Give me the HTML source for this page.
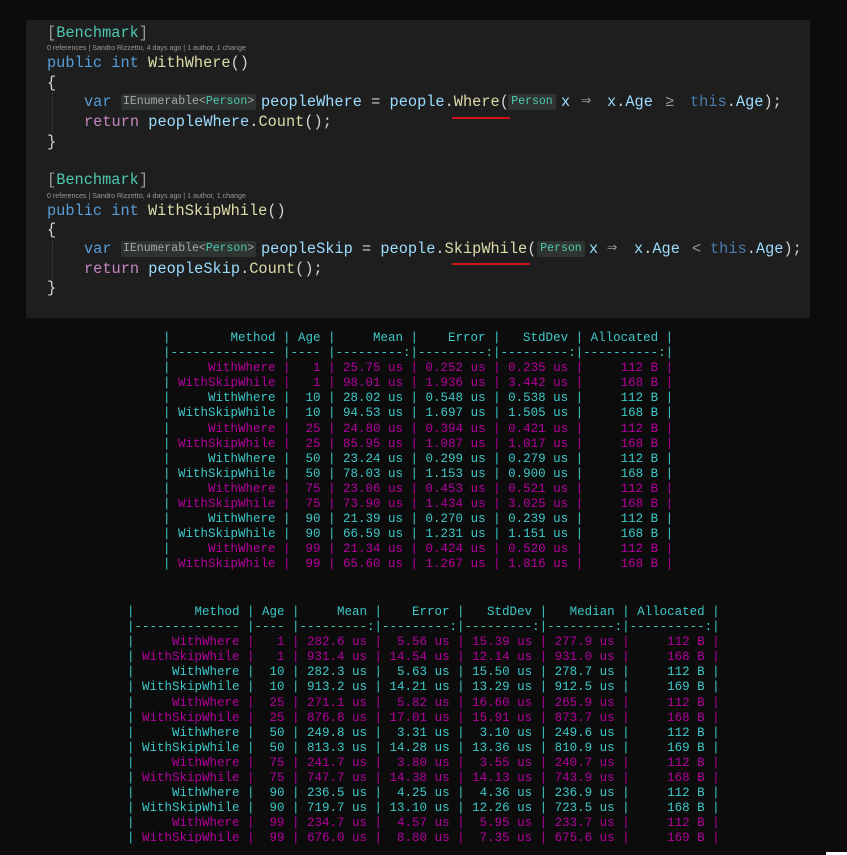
<!DOCTYPE html>
<html><head><meta charset="utf-8">
<style>
html,body{margin:0;padding:0;}
body{width:847px;height:855px;background:#0c0c0c;position:relative;overflow:hidden;font-family:"Liberation Mono",monospace;}
#ed{position:absolute;left:26px;top:20px;width:784px;height:298px;background:#1e1e1e;}
.l{position:absolute;white-space:pre;font-size:15.3px;line-height:20px;height:20px;color:#d4d4d4;}
.lens{position:absolute;white-space:pre;font-family:"Liberation Sans",sans-serif;font-size:7.1px;color:#9a9a9a;line-height:10px;}
.at{color:#4ec9b0}.kw{color:#569cd6}.fn{color:#dcdcaa}.v{color:#9cdcfe}.rt{color:#c586c0}.th{color:#4b7bad}.op{color:#9a9a9a}
.hint{position:absolute;background:#2f3431;color:#a7a7a7;font-size:11.5px;line-height:16px;height:16px;padding:0 2px;border-radius:2px;white-space:pre;}
.hint b{font-weight:normal;color:#4ec9b0}
.sq{position:absolute;height:2px;background:#d0141c;}
.guide{position:absolute;width:0;border-left:1px dotted #404040;}
pre.t{position:absolute;margin:0;font-family:"Liberation Mono",monospace;font-size:12.5px;line-height:15.1px;color:#3ec8c8;}
.m{color:#b4009e}.c{color:#3ec8c8}
#wc{position:absolute;left:826px;top:852px;width:21px;height:3px;background:#fff;}
</style></head><body>
<div id="ed"></div>
<div class="guide" style="left:52px;top:93px;height:40px"></div>
<div class="guide" style="left:52px;top:240px;height:40px"></div>

<div class="l" style="left:47px;top:23px"><span class="op">[</span><span class="at">Benchmark</span><span class="op">]</span></div>
<div class="lens" style="left:47px;top:43px">0 references | Sandro Rizzetto, 4 days ago | 1 author, 1 change</div>
<div class="l" style="left:47px;top:53px"><span class="kw">public</span> <span class="kw">int</span> <span class="fn">WithWhere</span>()</div>
<div class="l" style="left:47px;top:73px">{</div>
<div class="l" style="left:84px;top:92px"><span class="kw">var</span></div>
<div class="hint" style="left:121px;top:94px">IEnumerable&lt;<b>Person</b>&gt;</div>
<div class="l" style="left:261px;top:92px"><span class="v">peopleWhere</span> = <span class="v">people</span>.<span class="fn">Where</span>(</div>
<div class="hint" style="left:508px;top:94px;width:44px;text-align:center"><b>Person</b></div>
<div class="l" style="left:561px;top:92px"><span class="v">x</span></div>
<div class="l" style="left:581px;top:92px;font-size:17px"><span class="op">⇒</span></div>
<div class="l" style="left:607px;top:92px"><span class="v">x</span>.<span class="v">Age</span></div>
<div class="l" style="left:665px;top:92px"><span class="op">≥</span></div>
<div class="l" style="left:690px;top:92px"><span class="th">this</span>.<span class="v">Age</span>);</div>
<div class="sq" style="left:452px;top:117px;width:58px"></div>
<div class="l" style="left:84px;top:112px"><span class="rt">return</span> <span class="v">peopleWhere</span>.<span class="fn">Count</span>();</div>
<div class="l" style="left:47px;top:132px">}</div>

<div class="l" style="left:47px;top:170px"><span class="op">[</span><span class="at">Benchmark</span><span class="op">]</span></div>
<div class="lens" style="left:47px;top:191px">0 references | Sandro Rizzetto, 4 days ago | 1 author, 1 change</div>
<div class="l" style="left:47px;top:201px"><span class="kw">public</span> <span class="kw">int</span> <span class="fn">WithSkipWhile</span>()</div>
<div class="l" style="left:47px;top:220px">{</div>
<div class="l" style="left:84px;top:239px"><span class="kw">var</span></div>
<div class="hint" style="left:121px;top:241px">IEnumerable&lt;<b>Person</b>&gt;</div>
<div class="l" style="left:261px;top:239px"><span class="v">peopleSkip</span> = <span class="v">people</span>.<span class="fn">SkipWhile</span>(</div>
<div class="hint" style="left:537px;top:241px;width:44px;text-align:center"><b>Person</b></div>
<div class="l" style="left:589px;top:239px"><span class="v">x</span></div>
<div class="l" style="left:607px;top:239px;font-size:17px"><span class="op">⇒</span></div>
<div class="l" style="left:634px;top:239px"><span class="v">x</span>.<span class="v">Age</span></div>
<div class="l" style="left:692px;top:239px"><span class="op">&lt;</span></div>
<div class="l" style="left:710px;top:239px"><span class="th">this</span>.<span class="v">Age</span>);</div>
<div class="sq" style="left:452px;top:263px;width:78px"></div>
<div class="l" style="left:84px;top:259px"><span class="rt">return</span> <span class="v">peopleSkip</span>.<span class="fn">Count</span>();</div>
<div class="l" style="left:47px;top:278px">}</div>

<pre class="t" style="left:163px;top:331px">|        Method | Age |     Mean |    Error |   StdDev | Allocated |
|-------------- |---- |---------:|---------:|---------:|----------:|
|<span class="m">     WithWhere |   1 | 25.75 us | 0.252 us | 0.235 us |     112 B |</span>
|<span class="m"> WithSkipWhile |   1 | 98.01 us | 1.936 us | 3.442 us |     168 B |</span>
|<span class="c">     WithWhere |  10 | 28.02 us | 0.548 us | 0.538 us |     112 B |</span>
|<span class="c"> WithSkipWhile |  10 | 94.53 us | 1.697 us | 1.505 us |     168 B |</span>
|<span class="m">     WithWhere |  25 | 24.80 us | 0.394 us | 0.421 us |     112 B |</span>
|<span class="m"> WithSkipWhile |  25 | 85.95 us | 1.087 us | 1.017 us |     168 B |</span>
|<span class="c">     WithWhere |  50 | 23.24 us | 0.299 us | 0.279 us |     112 B |</span>
|<span class="c"> WithSkipWhile |  50 | 78.03 us | 1.153 us | 0.900 us |     168 B |</span>
|<span class="m">     WithWhere |  75 | 23.06 us | 0.453 us | 0.521 us |     112 B |</span>
|<span class="m"> WithSkipWhile |  75 | 73.90 us | 1.434 us | 3.025 us |     168 B |</span>
|<span class="c">     WithWhere |  90 | 21.39 us | 0.270 us | 0.239 us |     112 B |</span>
|<span class="c"> WithSkipWhile |  90 | 66.59 us | 1.231 us | 1.151 us |     168 B |</span>
|<span class="m">     WithWhere |  99 | 21.34 us | 0.424 us | 0.520 us |     112 B |</span>
|<span class="m"> WithSkipWhile |  99 | 65.60 us | 1.267 us | 1.816 us |     168 B |</span></pre>

<pre class="t" style="left:127px;top:605px">|        Method | Age |     Mean |    Error |   StdDev |   Median | Allocated |
|-------------- |---- |---------:|---------:|---------:|---------:|----------:|
|<span class="m">     WithWhere |   1 | 282.6 us |  5.56 us | 15.39 us | 277.9 us |     112 B |</span>
|<span class="m"> WithSkipWhile |   1 | 931.4 us | 14.54 us | 12.14 us | 931.0 us |     168 B |</span>
|<span class="c">     WithWhere |  10 | 282.3 us |  5.63 us | 15.50 us | 278.7 us |     112 B |</span>
|<span class="c"> WithSkipWhile |  10 | 913.2 us | 14.21 us | 13.29 us | 912.5 us |     169 B |</span>
|<span class="m">     WithWhere |  25 | 271.1 us |  5.82 us | 16.60 us | 265.9 us |     112 B |</span>
|<span class="m"> WithSkipWhile |  25 | 876.8 us | 17.01 us | 15.91 us | 873.7 us |     168 B |</span>
|<span class="c">     WithWhere |  50 | 249.8 us |  3.31 us |  3.10 us | 249.6 us |     112 B |</span>
|<span class="c"> WithSkipWhile |  50 | 813.3 us | 14.28 us | 13.36 us | 810.9 us |     169 B |</span>
|<span class="m">     WithWhere |  75 | 241.7 us |  3.80 us |  3.55 us | 240.7 us |     112 B |</span>
|<span class="m"> WithSkipWhile |  75 | 747.7 us | 14.38 us | 14.13 us | 743.9 us |     168 B |</span>
|<span class="c">     WithWhere |  90 | 236.5 us |  4.25 us |  4.36 us | 236.9 us |     112 B |</span>
|<span class="c"> WithSkipWhile |  90 | 719.7 us | 13.10 us | 12.26 us | 723.5 us |     168 B |</span>
|<span class="m">     WithWhere |  99 | 234.7 us |  4.57 us |  5.95 us | 233.7 us |     112 B |</span>
|<span class="m"> WithSkipWhile |  99 | 676.0 us |  8.80 us |  7.35 us | 675.6 us |     169 B |</span></pre>
<div id="wc"></div>
</body></html>
